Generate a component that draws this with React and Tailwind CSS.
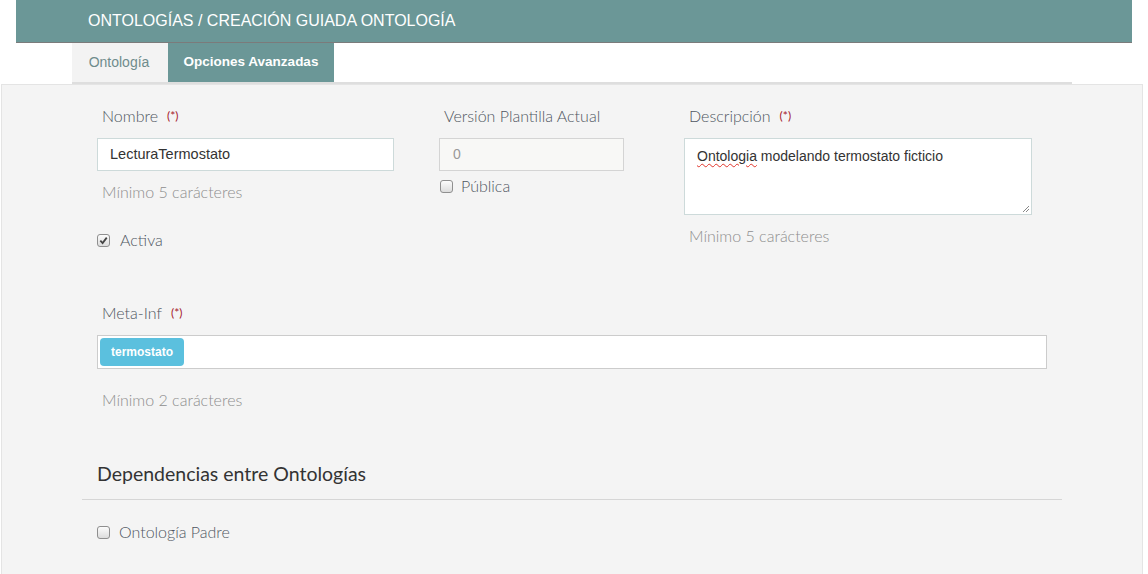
import React from "react";

const Check = ({ checked }) => (
  <span className="inline-flex h-[13px] w-[13px] items-center justify-center rounded-[3px] border border-[#8f8f8f] bg-gradient-to-b from-[#fcfcfc] to-[#dcdcdc]">
    {checked && (
      <svg width="9" height="9" viewBox="0 0 10 10">
        <path d="M1.5 5.2 L4 7.8 L8.6 1.8" fill="none" stroke="#444" strokeWidth="2" />
      </svg>
    )}
  </span>
);

const Label = ({ children, required }) => (
  <div className="flex items-center pl-[5px] text-[16px] font-light text-[#4f5661]">
    {children}
    {required && <span className="ml-[9px] text-[12px] font-normal text-[#a4182b]">(*)</span>}
  </div>
);

const Hint = ({ children }) => (
  <div className="pl-[5px] text-[16px] font-light text-[#8e8e8e]">{children}</div>
);

export default function App() {
  return (
    <div className="min-h-[574px] bg-white font-['Lato',sans-serif]">
      <div className="mx-[16px] flex h-[43px] items-center border-b border-[#7b7b7b] bg-[#6b9797] pl-[72px] font-['Liberation_Sans',Arial,sans-serif] text-[16px] text-white">
        ONTOLOGÍAS / CREACIÓN GUIADA ONTOLOGÍA
      </div>
      <div className="ml-[72px] mr-[76px] flex h-[41px] border-b-2 border-[#dedede] font-['Liberation_Sans',Arial,sans-serif]">
        <div className="flex w-[96px] items-center justify-center bg-[#f3f3f3] pr-[2px] text-[14px] text-[#6f8c8c]">Ontología</div>
        <div className="flex w-[166px] items-center justify-center bg-[#6b9797] text-[13.5px] font-bold text-white">Opciones Avanzadas</div>
      </div>
      <div className="ml-[1px] mr-[5px] min-h-[490px] border border-b-0 border-[#e4e4e4] bg-[#f4f4f4]">
        <div className="ml-[80px] w-[980px] pt-[19px]">
          <div className="flex px-[15px]">
            <div className="w-[297px]">
              <Label required>Nombre</Label>
              <div className="mt-[10px] flex h-[33px] items-center border border-[#cddada] bg-white pl-[12px] font-['Liberation_Sans',Arial,sans-serif] text-[14.5px] text-[#333]">
                LecturaTermostato
              </div>
              <div className="mt-[9px]">
                <Hint>Mínimo 5 carácteres</Hint>
              </div>
              <div className="mt-[24px] flex items-center gap-[10px] text-[16px] font-light text-[#4f5661]">
                <Check checked />
                Activa
              </div>
            </div>
            <div className="ml-[45px] w-[185px]">
              <Label>Versión Plantilla Actual</Label>
              <div className="mt-[10px] flex h-[33px] items-center border border-[#d4d4d4] bg-[#f8f8f6] pl-[13px] font-['Liberation_Sans',Arial,sans-serif] text-[14px] text-[#999]">
                0
              </div>
              <div className="mt-[3px] flex items-center gap-[8px] pl-[1px] text-[16px] font-light text-[#4f5661]">
                <Check />
                Pública
              </div>
            </div>
            <div className="ml-[60px] w-[348px]">
              <Label required>Descripción</Label>
              <div className="relative mt-[10px] h-[77px] border border-[#cddada] bg-white pl-[12px] pt-[7px] font-['Liberation_Sans',Arial,sans-serif] text-[14px] text-[#333]">
                <span className="underline decoration-[#e0352b] decoration-wavy decoration-1 underline-offset-2">Ontologia</span> modelando termostato ficticio
                <svg className="absolute bottom-[1px] right-[1px]" width="9" height="9" viewBox="0 0 9 9">
                  <path d="M8 2 L2 8 M8 5 L5 8" stroke="#888" strokeWidth="1" />
                </svg>
              </div>
              <div className="mt-[9px]">
                <Hint>Mínimo 5 carácteres</Hint>
              </div>
            </div>
          </div>
          <div className="mt-[49px] px-[15px]">
            <Label required>Meta-Inf</Label>
            <div className="mt-[10px] flex h-[34px] items-center border border-[#cccccc] bg-white pl-[2px]">
              <span className="flex h-[28px] items-center rounded-[4px] bg-[#5bc0de] px-[11px] font-['Liberation_Sans',Arial,sans-serif] text-[12px] font-bold text-white">
                termostato
              </span>
            </div>
            <div className="mt-[19px]">
              <Hint>Mínimo 2 carácteres</Hint>
            </div>
          </div>
          <div className="mt-[47px] border-b border-[#d6d6d6] px-[15px] pb-[11px] text-[19.5px] text-[#333]">
            Dependencias entre Ontologías
          </div>
          <div className="mt-[20px] flex items-center gap-[9px] px-[15px] text-[16px] font-light text-[#4f5661]">
            <Check />
            Ontología Padre
          </div>
        </div>
      </div>
    </div>
  );
}
